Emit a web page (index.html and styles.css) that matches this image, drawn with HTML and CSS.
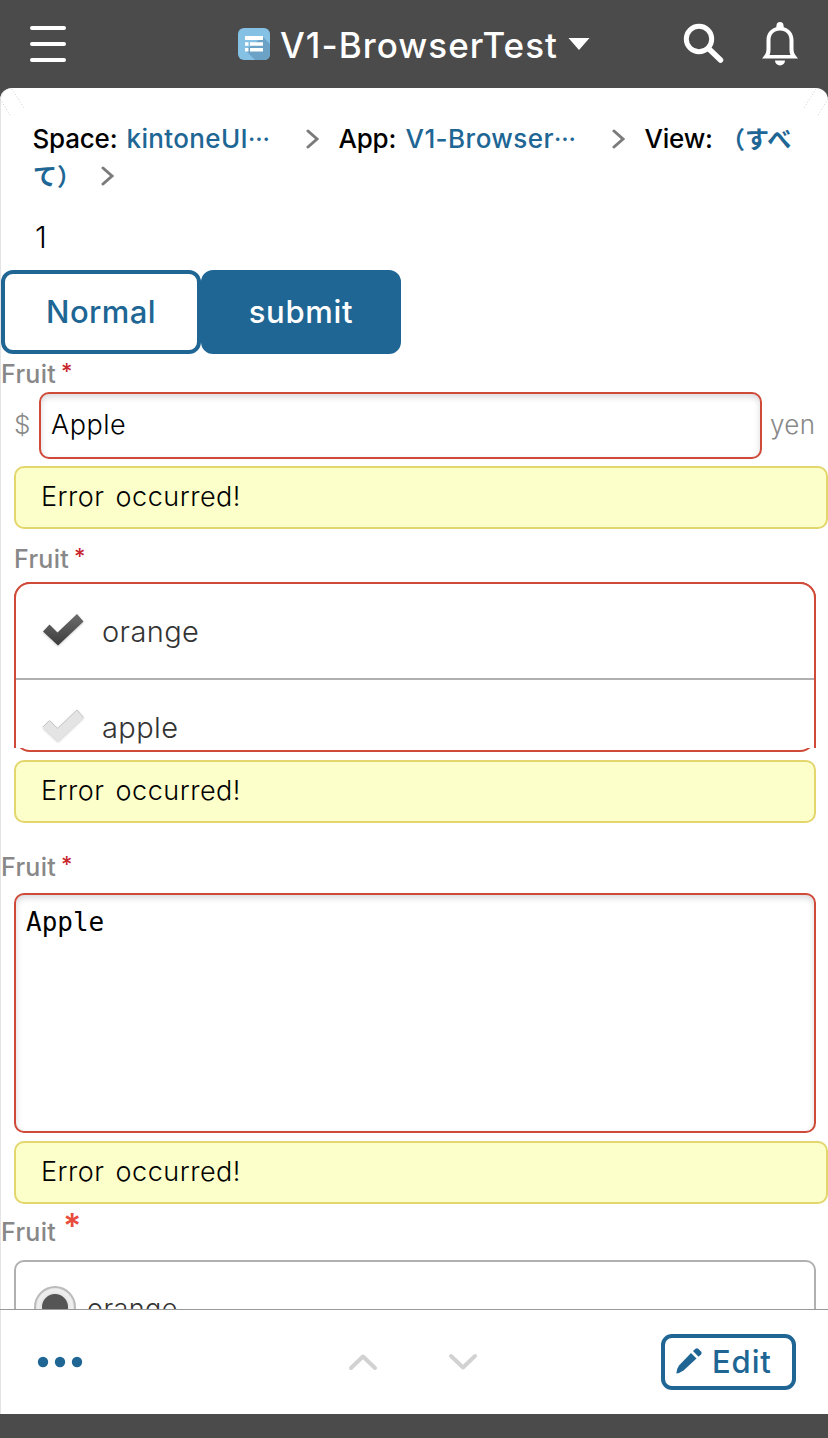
FILE: index.html
```html
<!DOCTYPE html>
<html lang="en">
<head>
<meta charset="utf-8">
<title>V1-BrowserTest</title>
<link rel="stylesheet" href="styles.css">
</head>
<body>
<div class="screen">
  <header class="header">
    <svg class="menu" width="36" height="36" viewBox="0 0 36 36"><path d="M2 2H34M2 18H34M2 34H34" stroke="#fff" stroke-width="4" stroke-linecap="round"/></svg>
    <div class="heading">
      <svg class="app-icon" width="32" height="32" viewBox="0 0 32 32"><rect width="32" height="32" rx="6" fill="#85c1e5"/><path d="M25 9L32 16V26Q32 32 26 32H17L7 22Z" fill="#6ca2c5"/><path d="M7 8H25V12H7ZM7 14.200H10.500V17.800H7ZM12 14.200H25V17.800H12ZM7 20H10.500V23.500H7ZM12 20H25V23.500H12Z" fill="#fff"/></svg>
      <h1 class="title">V1-BrowserTest</h1>
      <svg class="caret" width="22" height="12" viewBox="0 0 22 12"><path d="M.500 0H21.500L11 12Z" fill="#fff"/></svg>
    </div>
    <svg class="search" width="42" height="42" viewBox="0 0 42 42" fill="none" stroke="#fff"><circle cx="16" cy="16" r="12.700" stroke-width="5"/><path d="M25.500 25.500L37.500 37" stroke-width="5.500" stroke-linecap="round"/></svg>
    <svg class="bell" width="36" height="44" viewBox="0 0 36 44"><path d="M18 0A3.500 3.500 0 0 1 21.500 3.500L21.800 5.200C28 7 31.500 12 31.500 18V27C31.500 31 33 33 36 36.500H0C3 33 4.500 31 4.500 27V18C4.500 12 8 7 14.200 5.200L14.500 3.500A3.500 3.500 0 0 1 18 0ZM18 8.500C12 8.500 8.500 12.500 8.500 18V28Q8.500 31 7.500 33H28.500Q27.500 31 27.500 28V18C27.500 12.500 24 8.500 18 8.500Z" fill="#fff" fill-rule="evenodd"/><path d="M13 38.500H23A5 5 0 0 1 13 38.500Z" fill="#fff"/></svg>
  </header>

  <main class="main">
    <svg class="corner" width="26" height="30" viewBox="0 0 26 30"><path d="M0 11L10 27M12 1L24 20" /></svg>
    <svg class="corner corner-right" width="26" height="30" viewBox="0 0 26 30"><path d="M0 11L10 27M12 1L24 20" /></svg>
    <nav class="crumbs">
      <div class="crumb-row">
        <span>Space:</span><a class="link-space">kintoneUI<span class="more">…</span></a>
        <svg class="chev" width="14" height="20" viewBox="0 0 14 20"><path d="M2 2L11 10L2 18"/></svg>
        <span>App:</span><a class="link-app">V1-Browser<span class="more">…</span></a>
        <svg class="chev" width="14" height="20" viewBox="0 0 14 20"><path d="M2 2L11 10L2 18"/></svg>
        <span>View:</span><a class="jp" lang="ja">（すべ</a>
      </div>
      <div class="crumb-row crumb-rest">
        <a class="jp" lang="ja">て）</a>
        <svg class="chev" width="14" height="20" viewBox="0 0 14 20"><path d="M2 2L11 10L2 18"/></svg>
      </div>
    </nav>
    <div class="record-number">1</div>
    <div class="buttons">
      <button class="btn btn-normal">Normal</button><button class="btn btn-submit">submit</button>
    </div>

    <div class="label label-first">Fruit<span class="req">*</span></div>
    <div class="input-row">
      <span class="prefix">$</span>
      <div class="input">Apple</div>
      <span class="suffix">yen</span>
    </div>
    <div class="error error-wide">Error occurred!</div>

    <div class="label label-indent">Fruit<span class="req">*</span></div>
    <div class="select">
      <div class="options">
        <div class="option">
          <svg class="check" width="44" height="36" viewBox="0 0 44 36"><defs><linearGradient id="dark" x2="0" y2="1"><stop stop-color="#6c6c6c"/><stop offset="1" stop-color="#3c3c3c"/></linearGradient></defs><path d="M2 20.500L8.500 13.500L16.500 21.500L36 3L42.500 10.500L17 34.500Z" fill="url(#dark)"/></svg>
          <span class="option-text">orange</span>
        </div>
        <div class="option">
          <svg class="check" width="44" height="36" viewBox="0 0 44 36"><path d="M2 20.500L8.500 13.500L16.500 21.500L36 3L42.500 10.500L17 34.500Z" fill="#e4e4e4"/><path d="M2 20L8.500 13.500L16.500 21.500L36 3L42.500 10.500" fill="none" stroke="#c6c6c6"/></svg>
          <span class="option-text">apple</span>
        </div>
      </div>
    </div>
    <div class="error">Error occurred!</div>

    <div class="label label-area">Fruit<span class="req">*</span></div>
    <div class="textarea">Apple</div>
    <div class="error error-wide">Error occurred!</div>

    <div class="label label-radio">Fruit<span class="req req-big">*</span></div>
    <div class="radio-box">
      <span class="radio"></span><span class="radio-text">orange</span>
    </div>
  </main>

  <footer class="footer">
    <svg class="dots" width="46" height="12" viewBox="0 0 46 12" fill="#206694"><circle cx="6" cy="6" r="5.200"/><circle cx="23" cy="6" r="5.200"/><circle cx="40" cy="6" r="5.200"/></svg>
    <svg class="arrow arrow-up" width="30" height="18" viewBox="0 0 30 18"><path d="M3 15L15 3.500L27 15"/></svg>
    <svg class="arrow arrow-down" width="30" height="18" viewBox="0 0 30 18"><path d="M3 3L15 14.500L27 3"/></svg>
    <button class="edit">
      <svg width="28" height="28" viewBox="0 0 28 28" fill="#206694"><path d="M16 6L21.500 11.500L8.500 23.500Q5 26 1.300 26.500Q1.500 22 4 18.500Z"/><path d="M18 4L20.500 1.700Q22 .500 23.500 2L26 4.500Q27.500 6 26 7.500L23.500 9.700Z"/></svg>
      <span>Edit</span>
    </button>
  </footer>
</div>
</body>
</html>
```

FILE: styles.css
```css
* { box-sizing: border-box; }
body { margin: 0; background: #4b4b4b; font-family: Inter, "Noto Sans CJK JP", sans-serif; color: #000; }
h1 { margin: 0; }
button { padding: 0; font-family: inherit; }
svg { display: block; flex: none; }
.screen { width: 828px; height: 1438px; display: flex; flex-direction: column; overflow: hidden; white-space: nowrap; }

.header { height: 88px; flex: none; display: flex; align-items: center; padding: 0 30px; color: #fff; }
.heading { display: flex; align-items: center; width: 352px; margin-left: 172px; }
.title { width: 276px; margin-left: 10px; font-size: 35px; font-weight: 500; line-height: 86px; padding-top: 1px; letter-spacing: 1.05px; }
.caret { margin-left: 12px; }
.search { margin-left: 93px; }
.bell { margin-left: 37px; }

.main { position: relative; height: 1221px; flex: none; overflow: hidden; background: #fff; border-radius: 12px 12px 0 0; box-shadow: inset 1px 0 #e3e3e3; }
.corner { position: absolute; left: 0; top: 0; fill: none; stroke: #bbb; stroke-width: .7; stroke-dasharray: 1 2; }
.corner-right { left: auto; right: 0; transform: scaleX(-1); }
.crumbs { padding: 31px 0 0 33px; font-size: 26px; font-weight: 550; line-height: 38px; }
.crumb-row { display: grid; grid-template-columns: 94px 179px 33px 67px 206px 33px 76px auto; align-items: center; height: 38px; }
.crumb-row > span, .link-space, .link-app { padding-top: 1px; margin-left: -.5px; }
.crumb-row > span { letter-spacing: -.2px; }
.crumb-rest { grid-template-columns: 68px auto; }
.crumbs a { color: #206694; }
.jp { font: 700 24px/34px "Noto Sans CJK JP", sans-serif; padding-bottom: 2px; }
.more { font-size: 24px; line-height: 0; vertical-align: 7px; letter-spacing: 0; }
.link-space { letter-spacing: .35px; }
.link-app { letter-spacing: .45px; }
.chev { fill: none; stroke: #7b7b7b; stroke-width: 3; stroke-linecap: round; }
.record-number { padding: 20px 0 0 35px; height: 75px; font-size: 30px; font-weight: 300; line-height: 44px; }
.buttons { display: flex; margin-left: 1px; height: 84px; }
.btn { width: 200px; padding-bottom: 2px; border: 4px solid #206694; border-radius: 12px; font-size: 31px; font-weight: 500; }
.btn-normal { background: #fff; color: #206694; letter-spacing: .4px; }
.btn-submit { background: #206694; color: #fff; letter-spacing: .7px; }

.label { display: flex; height: 38px; line-height: 38px; padding-left: 1px; font-size: 25px; font-weight: 500; letter-spacing: .3px; color: #888; }
.label-first { padding-top: 1px; }
.label-indent { height: 53px; padding: 11px 0 0 14px; }
.label-area { height: 70px; padding-top: 25px; }
.label-radio { height: 56px; padding-top: 9px; }
.req { margin-left: 5px; font-size: 22px; color: #c9252d; line-height: 33px; }
.req-big { margin-left: 7px; font-size: 34px; font-weight: 600; color: #e74c3c; line-height: 26px; }

.input-row { display: flex; align-items: center; height: 67px; font-size: 26px; font-weight: 300; padding-left: 14px; }
.prefix { width: 25px; padding-bottom: 2px; color: #888; }
.input { width: 723px; height: 67px; padding-left: 10px; border: 2px solid #cf4a38; border-radius: 10px; line-height: 61px; font-size: 27px; letter-spacing: .5px; box-shadow: inset 0 3px 6px #d9dadd; }
.suffix { margin-left: 8px; padding-bottom: 2px; color: #888; letter-spacing: .4px; }
.error { height: 63px; margin: 8px 12px 0 14px; padding-left: 25px; border: 2px solid #e3d66d; border-radius: 10px; background: #fcffc9; font-size: 27px; font-weight: 300; line-height: 57px; letter-spacing: .5px; word-spacing: 3px; }
.error-wide { margin-right: 0; }
.input-row + .error { margin-top: 7px; }

.select { height: 170px; margin: 0 12px 0 14px; border: 2px solid #cf4a38; border-radius: 16px; }
.options { height: 166px; margin: -2px -2px 0; overflow: hidden; border: 2px solid #cf4a38; border-bottom: 0; border-radius: 16px 16px 0 0; background: #fff; }
.option { display: flex; align-items: center; height: 94px; padding: 2px 0 0 25px; }
.option + .option { height: 97px; border-top: 2px solid #b0b0b0; padding-top: 0; }
.check { margin-bottom: 6px; filter: drop-shadow(0 1px 1px #ccc); }
.option-text { margin-left: 17px; font-size: 29px; font-weight: 300; color: #333; line-height: 40px; letter-spacing: .4px; }

.textarea { height: 240px; margin: 0 12px 0 14px; padding: 10px; border: 2px solid #cf4a38; border-radius: 10px; font: 26px/34px "DejaVu Sans Mono", monospace; box-shadow: inset 0 3px 6px #d9dadd; }
.radio-box { display: flex; height: 150px; margin: 0 12px 0 14px; padding: 24px 18px; border: 2px solid #b0b0b0; border-radius: 10px; }
.radio { width: 42px; height: 42px; border: 2px solid #bbb; border-radius: 50%; background: radial-gradient(circle, #555 12.5px, #e6e6e6 13.5px, #f0f0f0 17px, #ddd 20px); }
.radio-text { margin-left: 11px; font-size: 27px; font-weight: 300; color: #333; line-height: 45px; letter-spacing: .4px; }

.footer { display: flex; align-items: center; height: 105px; flex: none; border-top: 1px solid #999; background: #fff; padding: 0 32px 0 37px; box-shadow: inset 1px 0 #e3e3e3; }
.arrow { fill: none; stroke: #d2d2d2; stroke-width: 4; stroke-linecap: round; stroke-linejoin: round; }
.arrow-up { margin-left: 265px; }
.arrow-down { margin-left: 70px; }
.edit { display: flex; align-items: center; width: 135px; height: 56px; margin-left: auto; padding: 0 0 2px 10px; border: 4px solid #206694; border-radius: 11px; background: #fff; color: #206694; font-size: 31px; font-weight: 500; letter-spacing: .9px; }
.edit span { margin-left: 9px; }
```
